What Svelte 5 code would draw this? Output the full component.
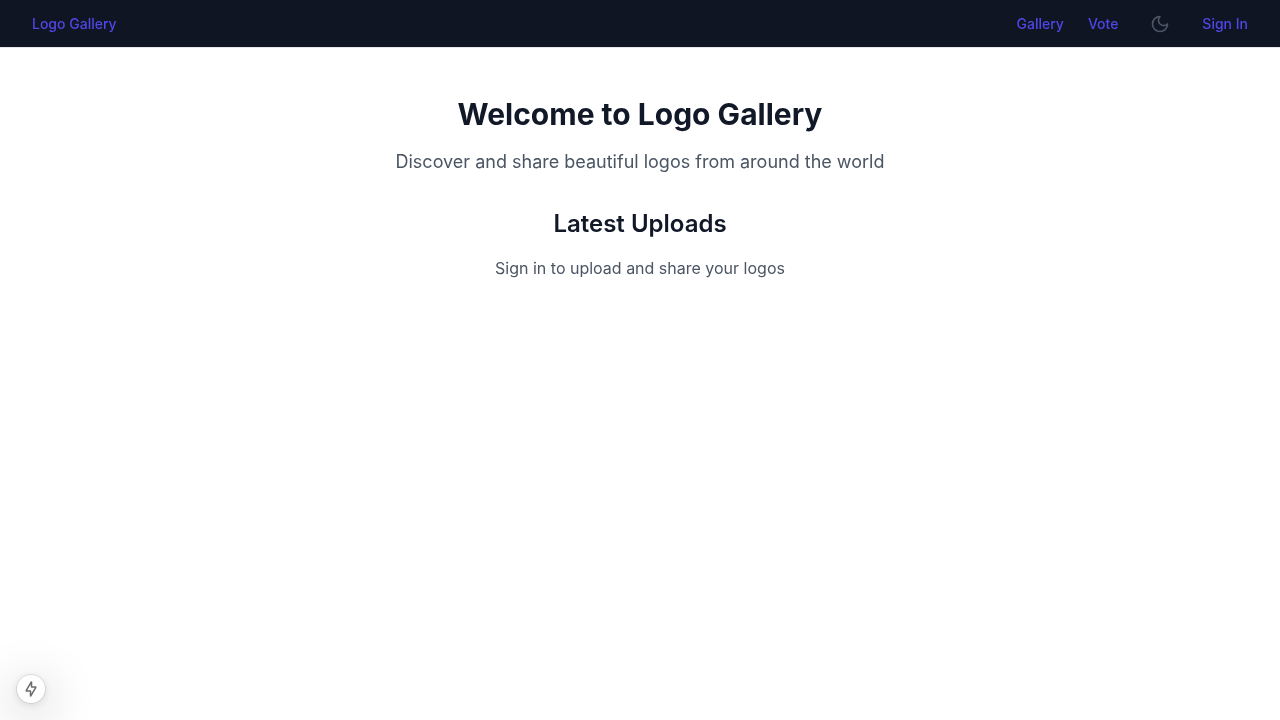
<script>
  const links = ['Gallery', 'Vote'];
</script>

<header>
  <div class="brand"><a href="#home">Logo Gallery</a></div>
  <nav>
    {#each links as link}
      <a href="#{link.toLowerCase()}">{link}</a>
    {/each}
    <button class="theme" aria-label="Toggle theme">
      <svg width="20" height="20" viewBox="0 0 24 24" fill="none" stroke="currentColor" stroke-width="2" stroke-linecap="round" stroke-linejoin="round">
        <path d="M12 3a6 6 0 0 0 9 9 9 9 0 1 1-9-9Z" />
      </svg>
    </button>
    <a href="#signin">Sign In</a>
  </nav>
</header>

<main>
  <h1>Welcome to Logo Gallery</h1>
  <p class="lead">Discover and share beautiful logos from around the world</p>
  <h2>Latest Uploads</h2>
  <p>Sign in to upload and share your logos</p>
</main>

<div class="indicator">
  <svg width="16" height="16" viewBox="0 0 16 16" fill="none" stroke="#6b6b6b" stroke-width="1.5" stroke-linejoin="bevel">
    <path d="M8.5 0.6 L3 9.9 H7.5 V15.4 L13 6.1 H8.5 Z" />
  </svg>
</div>

<style>
  :global(body) {
    margin: 0;
    background: #fff;
    color: #111827;
    font-family: Inter, sans-serif;
    font-size: 16px;
    line-height: 24px;
    -webkit-font-smoothing: antialiased;
  }
  header {
    display: grid;
    grid-template-columns: 1fr 1fr;
    align-items: center;
    box-sizing: border-box;
    height: 48px;
    padding: 0 32px;
    border-bottom: 1px solid #e5e7eb;
    background: #0f1523;
  }
  .brand, nav {
    display: flex;
    align-items: center;
    height: 47px;
    will-change: transform;
  }
  nav {
    justify-content: flex-end;
    gap: 24px;
  }
  a {
    color: #4f46e5;
    font-size: 14px;
    font-weight: 500;
    line-height: 20px;
    text-decoration: none;
  }
  .theme {
    display: flex;
    padding: 8px;
    border: 0;
    background: none;
    color: #4b5563;
  }
  main {
    padding-top: 48px;
    text-align: center;
    will-change: transform;
  }
  h1, h2, p {
    margin: 0;
  }
  h1 {
    font-size: 30px;
    font-weight: 700;
    line-height: 36px;
    margin-bottom: 16px;
  }
  h2 {
    font-size: 24px;
    font-weight: 600;
    line-height: 32px;
    margin-bottom: 16px;
  }
  p {
    color: #4b5563;
  }
  .lead {
    font-size: 18px;
    line-height: 28px;
    margin-bottom: 32px;
  }
  .indicator {
    position: fixed;
    left: 17px;
    bottom: 17px;
    display: flex;
    align-items: center;
    justify-content: center;
    width: 28px;
    height: 28px;
    border-radius: 50%;
    background: #fff;
    box-shadow: 0 0 0 1px rgba(0, 0, 0, 0.09), 0 11px 50px 5px rgba(0, 0, 0, 0.2), 0 2px 10px rgba(0, 0, 0, 0.12);
  }
</style>
